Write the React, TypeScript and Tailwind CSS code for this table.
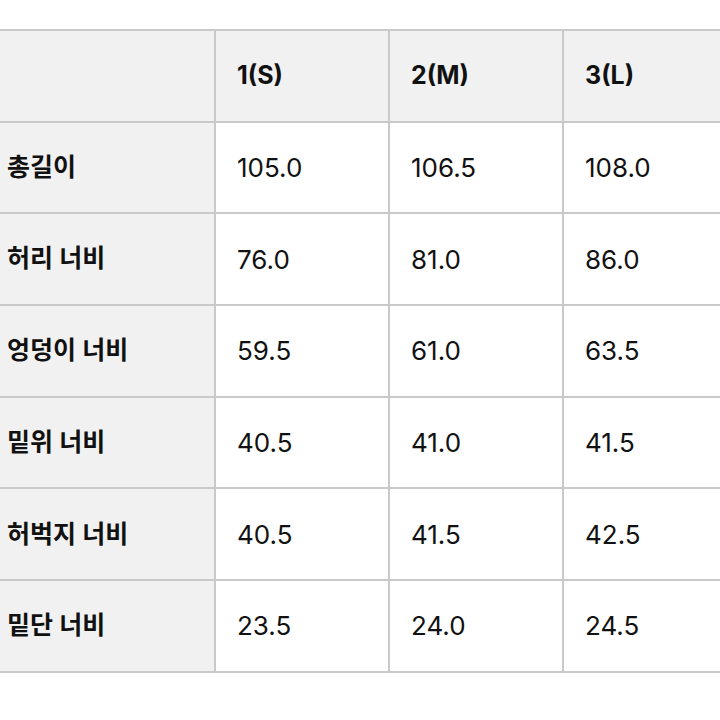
import React from "react";

const header = ["", "1(S)", "2(M)", "3(L)"];
const rows: string[][] = [
  ["총길이", "105.0", "106.5", "108.0"],
  ["허리 너비", "76.0", "81.0", "86.0"],
  ["엉덩이 너비", "59.5", "61.0", "63.5"],
  ["밑위 너비", "40.5", "41.0", "41.5"],
  ["허벅지 너비", "40.5", "41.5", "42.5"],
  ["밑단 너비", "23.5", "24.0", "24.5"],
];

const font = { fontFamily: 'Inter, "Noto Sans CJK KR", sans-serif' };

export default function App() {
  return (
    <div className="w-[720px] h-[720px] bg-white overflow-hidden pt-[29px]" style={font}>
      <div className="grid grid-cols-[216px_174px_174px_174px] w-[738px] border-t-2 border-[#c9c9c9] text-[#111111]">
        {header.map((h, i) => (
          <div
            key={"h" + i}
            className="h-[91.7px] bg-[#f1f1f1] border-r-2 border-b-2 border-[#c9c9c9] flex items-center pl-[21px] text-[25px] font-bold"
          >
            {h}
          </div>
        ))}
        {rows.map((r, ri) =>
          r.map((c, ci) => (
            <div
              key={ri + "-" + ci}
              className={
                ci === 0
                  ? "h-[91.7px] bg-[#f1f1f1] border-r-2 border-b-2 border-[#c9c9c9] flex items-center pl-[7px] text-[25px] font-semibold"
                  : "h-[91.7px] bg-white border-r-2 border-b-2 border-[#c9c9c9] flex items-center pl-[21px] text-[26px] font-normal"
              }
            >
              {c}
            </div>
          ))
        )}
      </div>
    </div>
  );
}
